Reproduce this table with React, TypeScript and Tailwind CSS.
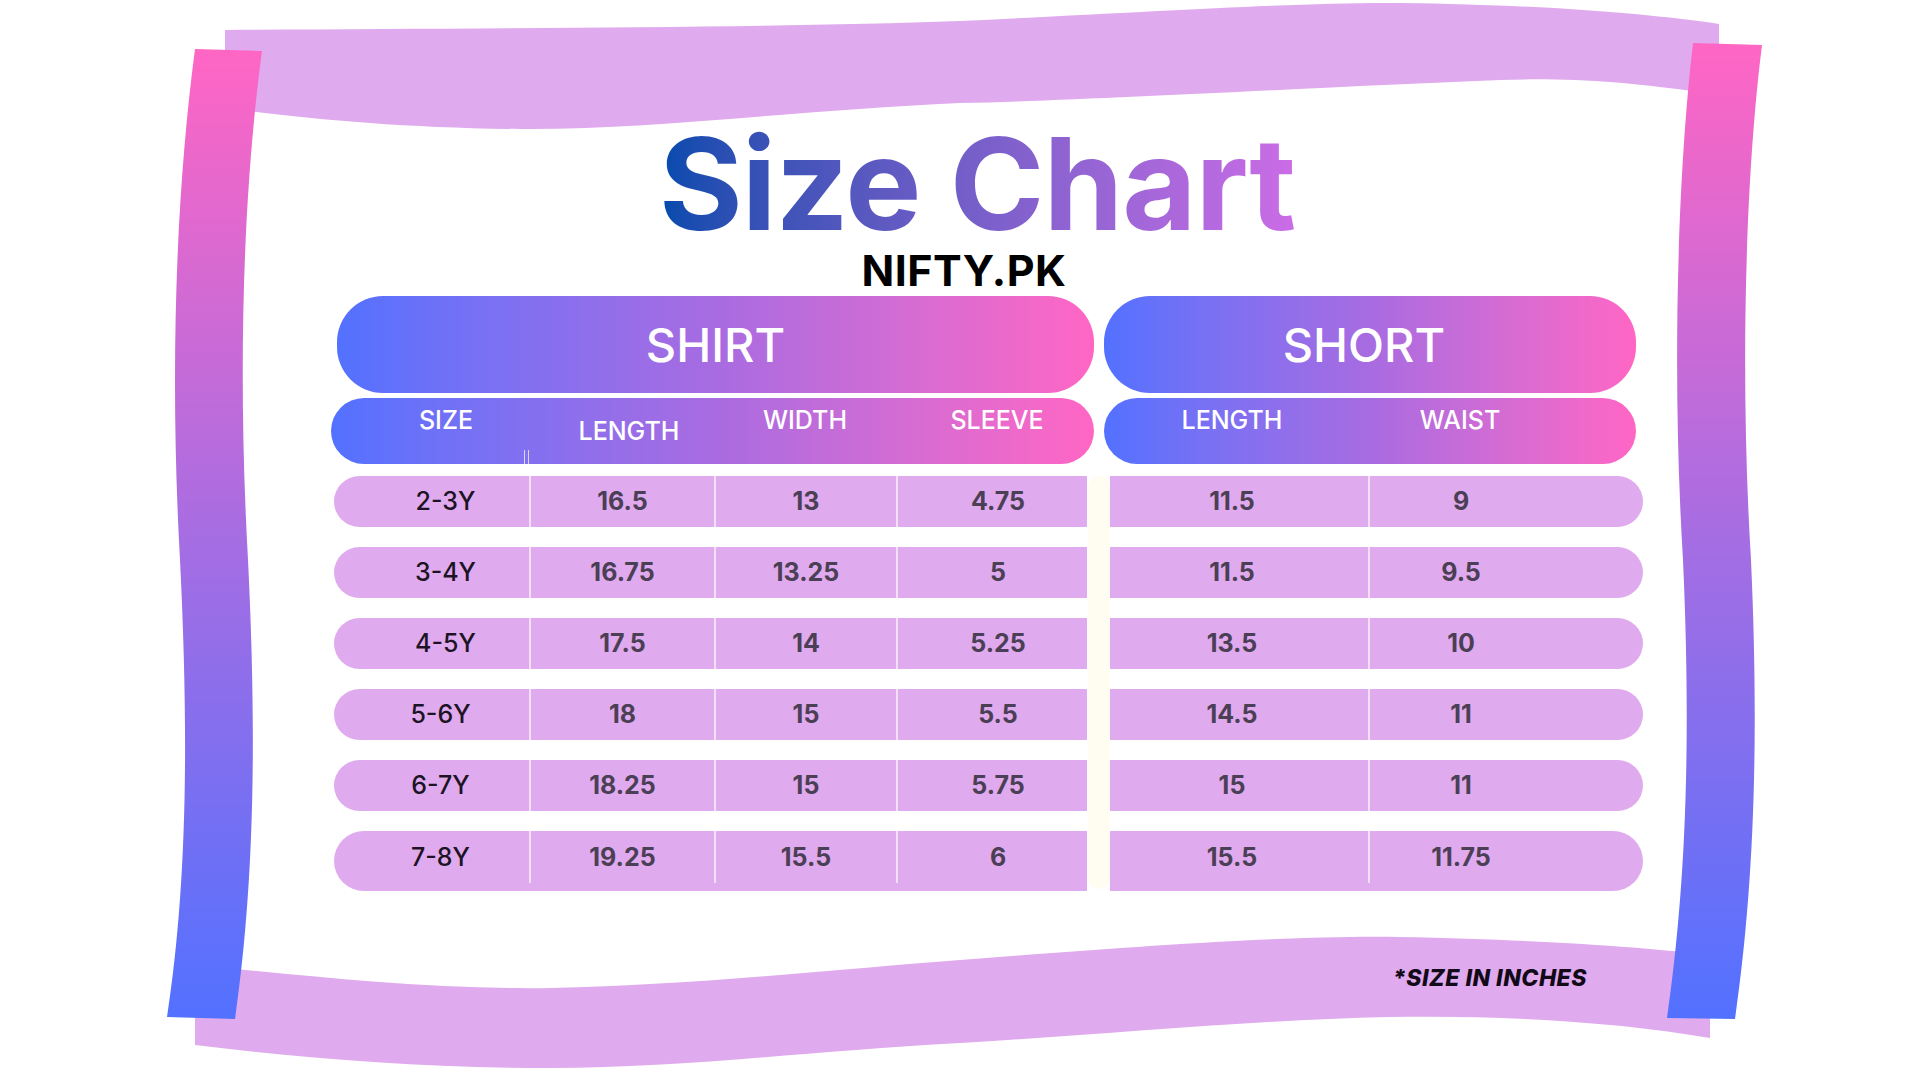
const rows = [
  { size: "2-3Y", length: "16.5", width: "13", sleeve: "4.75", sLength: "11.5", waist: "9" },
  { size: "3-4Y", length: "16.75", width: "13.25", sleeve: "5", sLength: "11.5", waist: "9.5" },
  { size: "4-5Y", length: "17.5", width: "14", sleeve: "5.25", sLength: "13.5", waist: "10" },
  { size: "5-6Y", length: "18", width: "15", sleeve: "5.5", sLength: "14.5", waist: "11" },
  { size: "6-7Y", length: "18.25", width: "15", sleeve: "5.75", sLength: "15", waist: "11" },
  { size: "7-8Y", length: "19.25", width: "15.5", sleeve: "6", sLength: "15.5", waist: "11.75" },
];

function Frame() {
  return (
    <svg
      className="absolute inset-0 pointer-events-none"
      width="1920"
      height="1080"
      viewBox="0 0 1920 1080"
    >
      <defs>
        <linearGradient id="bar" x1="0" y1="0" x2="0" y2="1">
          <stop offset="0" stopColor="#ff66c4" />
          <stop offset="0.5" stopColor="#a76de2" />
          <stop offset="1" stopColor="#5271ff" />
        </linearGradient>
      </defs>

      {/* top band */}
      <path
        d="M225,30 C500,28 760,28 960,21 C1150,12 1300,2 1400,3 C1550,5 1650,14 1719,24 L1719,95 C1620,80 1560,78 1500,80 C1300,88 1100,100 960,103 C800,110 650,130 520,129 C400,128 300,118 225,108 Z"
        fill="#e0aaee"
      />
      {/* bottom band */}
      <path
        d="M195,965 C300,975 430,990 551,988 C700,985 850,968 960,960 C1150,945 1300,935 1400,937 C1550,940 1650,948 1710,955 L1710,1038 C1620,1022 1500,1015 1389,1017 C1250,1020 1100,1035 960,1043 C800,1052 680,1068 551,1068 C420,1068 300,1058 195,1045 Z"
        fill="#e0aaee"
      />
      {/* side bars */}
      <path
        d="M195,49 L262,51 C242,200 238,380 248,560 C258,760 252,900 235,1019 L167,1017 C185,900 190,760 180,560 C170,380 175,200 195,49 Z"
        fill="url(#bar)"
      />
      <path
        d="M1693,43 L1762,45 C1745,180 1740,380 1751,560 C1760,760 1752,900 1735,1019 L1667,1018 C1684,900 1692,760 1683,560 C1672,380 1677,180 1693,43 Z"
        fill="url(#bar)"
      />
    </svg>
  );
}

export default function App() {
  return (
    <div
      className="relative w-[1920px] h-[1080px] overflow-hidden bg-white"
      style={{ fontFamily: "Inter, 'Open Sans', sans-serif" }}
    >
      <Frame />

      <div className="relative ml-[331px] w-[1312px] pt-[120px] flex flex-col">
        {/* ================= TITLE ================= */}
        <div className="flex justify-center pr-[20px]">
          <h1 className="inline-block text-[128px] leading-none font-bold tracking-[-1px] bg-linear-to-r from-[#004aad] to-[#cb6ce6] bg-clip-text text-transparent">
            Size Chart
          </h1>
        </div>
        <div className="mt-[1px] flex justify-center pr-[46px]">
          <p className="text-[43px] leading-none font-bold text-black tracking-[0.5px]">
            NIFTY.PK
          </p>
        </div>

        {/* ================= HEADERS ================= */}
        <div className="mt-[4px] flex">
          <div className="ml-[6px] w-[757px] h-[97px] rounded-[46px] bg-linear-to-r from-[#5271ff] via-[#a86be1] to-[#ff66c4] flex items-center justify-center">
            <span className="text-white text-[47px] leading-none font-medium">SHIRT</span>
          </div>
          <div className="ml-[10px] w-[532px] h-[97px] rounded-[46px] bg-linear-to-r from-[#5271ff] via-[#a86be1] to-[#ff66c4] flex items-center justify-center">
            <span className="text-white text-[47px] leading-none font-medium mr-[12px]">SHORT</span>
          </div>
        </div>

        <div className="mt-[5px] flex text-white text-[25px] leading-none font-medium">
          <div className="w-[763px] h-[66px] rounded-full bg-linear-to-r from-[#5271ff] via-[#a86be1] to-[#ff66c4] flex">
            <div className="w-[198px] flex flex-col items-center pt-[10px] pl-[32px]">
              <span>SIZE</span>
              <div className="mt-auto self-end w-[5px] h-[14px] border-x border-white/70" />
            </div>
            <div className="w-[185px] flex justify-center pt-[21px] pl-[15px]">LENGTH</div>
            <div className="w-[182px] flex justify-center pt-[10px]">WIDTH</div>
            <div className="w-[198px] flex justify-center pt-[10px] pl-[4px]">SLEEVE</div>
          </div>
          <div className="ml-[10px] w-[532px] h-[66px] rounded-full bg-linear-to-r from-[#5271ff] via-[#a86be1] to-[#ff66c4] flex">
            <div className="w-[264px] flex justify-center pt-[10px] pr-[8px]">LENGTH</div>
            <div className="w-[268px] flex justify-center pt-[10px] pr-[84px]">WAIST</div>
          </div>
        </div>

        {/* ================= ROWS ================= */}
        <div className="mt-[12px] flex">
          <div className="ml-[3px] w-[753px] flex flex-col gap-[20px]">
            {rows.map((r, i) => (
              <div
                key={r.size}
                className={`flex rounded-l-full bg-[#e0aaee] text-[25px] leading-none ${i === rows.length - 1 ? "h-[60px] pb-[8px]" : "h-[51px]"}`}
              >
                <div className={`w-[195px] flex items-center justify-center font-medium text-[#1c1424] ${i > 2 ? "pl-[18px]" : "pl-[28px]"}`}>
                  {r.size}
                </div>
                <div className="w-[185px] flex items-center justify-center font-bold text-[#4b3f55] border-l-2 border-[#f2e0f7]">
                  {r.length}
                </div>
                <div className="w-[182px] flex items-center justify-center font-bold text-[#4b3f55] border-l-2 border-[#f2e0f7]">
                  {r.width}
                </div>
                <div className="w-[191px] flex items-center justify-center pl-[11px] font-bold text-[#4b3f55] border-l-2 border-[#f2e0f7]">
                  {r.sleeve}
                </div>
              </div>
            ))}
          </div>

          <div className="ml-[1px] w-[22px] h-[413px] rounded-full bg-[#fffcf2]" />

          <div className="w-[533px] flex flex-col gap-[20px]">
            {rows.map((r, i) => (
              <div
                key={r.size}
                className={`flex rounded-r-full bg-[#e0aaee] text-[25px] leading-none font-bold text-[#4b3f55] ${i === rows.length - 1 ? "h-[60px] pb-[8px]" : "h-[51px]"}`}
              >
                <div className="w-[258px] flex items-center justify-center pr-[14px]">{r.sLength}</div>
                <div className="w-[275px] flex items-center justify-center pr-[91px] border-l-2 border-[#f2e0f7]">
                  {r.waist}
                </div>
              </div>
            ))}
          </div>
        </div>

        {/* ================= NOTE ================= */}
        <div className="mt-[76px] flex justify-end pr-[56px]">
          <p className="text-[23px] leading-none font-extrabold italic text-[#120a18] tracking-[0.5px]">
            *SIZE IN INCHES
          </p>
        </div>
      </div>
    </div>
  );
}
